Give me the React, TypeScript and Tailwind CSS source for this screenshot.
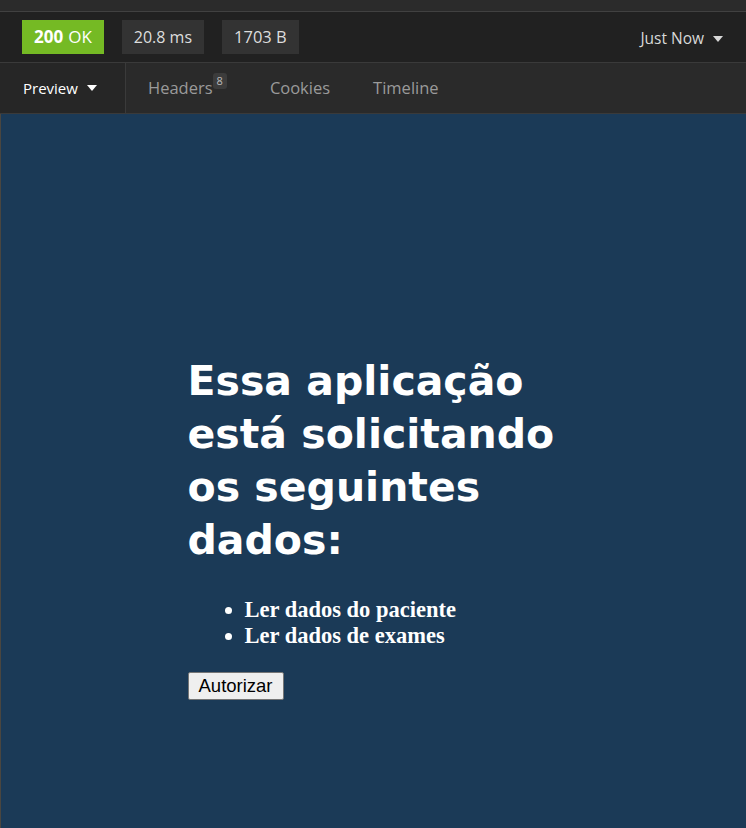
const ui = { fontFamily: '"Open Sans", "Noto Sans", sans-serif' };

function Caret() {
  return (
    <svg width="10" height="6" viewBox="0 0 10 6" className="ml-[9px]">
      <path d="M0 0 L10 0 L5 6 Z" fill="currentColor" />
    </svg>
  );
}

export default function App() {
  return (
    <div className="w-[746px] h-[828px] flex flex-col bg-[#2a2a2a]" style={ui}>
      <div className="h-[12px] bg-[#2b2b2b] border-b border-[#414141]" />

      {/* status bar */}
      <div className="h-[51px] flex items-center bg-[#212121] border-b border-[#3a3a3a] px-[22px]">
        <div className="h-[34px] px-[12px] flex items-center bg-[#75ba24] text-white text-[17px]">
          <span className="font-bold">200</span>
          <span className="ml-[5px]">OK</span>
        </div>
        <div className="h-[34px] ml-[18px] px-[12px] flex items-center bg-[#333333] text-[#dddddd] text-[16px]">
          20.8 ms
        </div>
        <div className="h-[34px] ml-[18px] px-[12px] flex items-center bg-[#333333] text-[#dddddd] text-[16.5px]">
          1703 B
        </div>
        <div className="ml-auto mt-[4px] flex items-center text-[#d8d8d8] text-[15.5px] pr-[1px]">
          Just Now
          <Caret />
        </div>
      </div>

      {/* tabs */}
      <div className="h-[51px] flex items-stretch bg-[#2a2a2a] border-b border-[#3a3a3a]">
        <div className="w-[126px] flex items-center pl-[23px] bg-[#262626] border-r border-[#3a3a3a] text-white text-[15px]">
          Preview
          <Caret />
        </div>
        <div className="flex items-center pl-[22px] text-[#9a9a9a] text-[16.5px]">
          <span>Headers</span>
          <span className="self-start mt-[10px] h-[16px] px-[4px] rounded-[3px] bg-[#3c3c3c] text-[#bbbbbb] text-[11px] leading-[16px]">
            8
          </span>
          <span className="ml-[43px]">Cookies</span>
          <span className="ml-[43px]">Timeline</span>
        </div>
      </div>

      {/* preview */}
      <div className="flex-1 bg-[#1b3a57] border-l border-[#4a4640] flex justify-center">
        <div className="w-[372px] pt-[241px]">
          <h1
            className="text-white font-bold text-[41px] leading-[53px]"
            style={{ fontFamily: '"DejaVu Sans", Verdana, sans-serif' }}
          >
            Essa aplicação está solicitando os seguintes dados:
          </h1>
          <ul
            className="list-disc pl-[57px] mt-[30px] text-white font-bold text-[22.5px] leading-[26px]"
            style={{ fontFamily: '"Liberation Serif", "Times New Roman", serif' }}
          >
            <li>Ler dados do paciente</li>
            <li>Ler dados de exames</li>
          </ul>
          <button
            className="mt-[23px] h-[28px] px-[10px] bg-[#efefef] border border-[#767676] rounded-[2px] text-black text-[18.5px] leading-[24px]"
            style={{ fontFamily: '"Liberation Sans", Arial, sans-serif' }}
          >
            Autorizar
          </button>
        </div>
      </div>
    </div>
  );
}
